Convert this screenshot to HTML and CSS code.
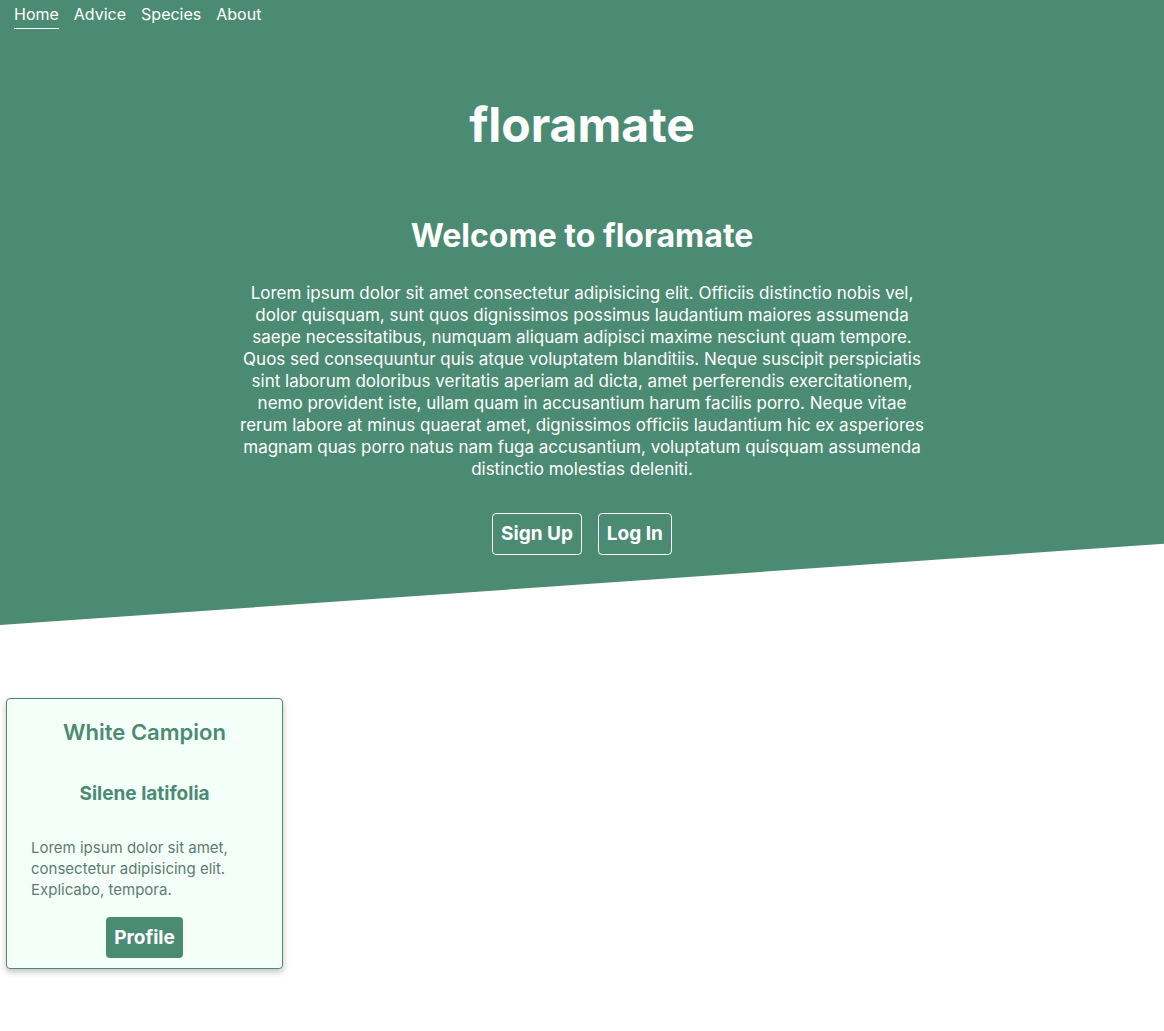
FILE: index.html
```html
<!DOCTYPE html>
<html lang="en">
<head>
<meta charset="utf-8">
<title>floramate</title>
<link rel="stylesheet" href="styles.css">
</head>
<body>
<header class="hero">
  <nav class="nav">
    <a class="nav-link active" href="#">Home</a>
    <a class="nav-link" href="#">Advice</a>
    <a class="nav-link" href="#">Species</a>
    <a class="nav-link" href="#">About</a>
  </nav>
  <h1 class="brand">floramate</h1>
  <section class="intro">
    <h2 class="intro-title">Welcome to floramate</h2>
    <p class="intro-text">Lorem ipsum dolor sit amet consectetur adipisicing elit. Officiis distinctio nobis vel, dolor quisquam, sunt quos dignissimos possimus laudantium maiores assumenda saepe necessitatibus, numquam aliquam adipisci maxime nesciunt quam tempore. Quos sed consequuntur quis atque voluptatem blanditiis. Neque suscipit perspiciatis sint laborum doloribus veritatis aperiam ad dicta, amet perferendis exercitationem, nemo provident iste, ullam quam in accusantium harum facilis porro. Neque vitae rerum labore at minus quaerat amet, dignissimos officiis laudantium hic ex asperiores magnam quas porro natus nam fuga accusantium, voluptatum quisquam assumenda distinctio molestias deleniti.</p>
    <div class="actions">
      <a class="btn-outline" href="#">Sign Up</a>
      <a class="btn-outline" href="#">Log In</a>
    </div>
  </section>
</header>
<main class="cards">
  <article class="card">
    <h3 class="card-title">White Campion</h3>
    <h4 class="card-sub">Silene latifolia</h4>
    <p class="card-text">Lorem ipsum dolor sit amet, consectetur adipisicing elit. Explicabo, tempora.</p>
    <a class="btn-fill" href="#">Profile</a>
  </article>
</main>
</body>
</html>
```
FILE: styles.css
```css
* { box-sizing: border-box; }
body {
  margin: 0;
  font-family: Inter, "Noto Sans", sans-serif;
  background: #fff;
}
a { text-decoration: none; color: inherit; }
.hero {
  background: #4b8b73;
  color: #fff;
  height: 625px;
  clip-path: polygon(0 0, 100% 0, 100% 87%, 0 100%);
  padding-top: 4px;
}
.nav {
  display: flex;
  gap: 15px;
  padding-left: 14px;
  font-size: 16px;
}
.nav-link {
  padding-bottom: 4px;
  border-bottom: 1px solid transparent;
}
.nav-link.active { border-bottom-color: #fff; }
.brand {
  margin: 66px 0 0;
  text-align: center;
  font-size: 48px;
  font-weight: 700;
  line-height: 60px;
}
.intro {
  width: 700px;
  margin: 0 auto;
  text-align: center;
}
.intro-title {
  margin: 61px 0 0;
  font-size: 32px;
  font-weight: 700;
  line-height: 40px;
}
.intro-text {
  margin: 26px 0 0;
  font-size: 17px;
  line-height: 22px;
}
.actions {
  display: flex;
  justify-content: center;
  gap: 16px;
  margin-top: 33px;
}
.btn-outline {
  border: 1px solid #fff;
  border-radius: 4px;
  padding: 0 8px;
  height: 42px;
  line-height: 40px;
  font-size: 19px;
  font-weight: 700;
}
.cards {
  padding: 73px 6px;
  display: flex;
}
.card {
  width: 277px;
  height: 271px;
  background: #f5fff9;
  border: 1px solid #4b8b73;
  border-radius: 4px;
  box-shadow: 0 3px 6px rgba(0,0,0,0.25);
  display: flex;
  flex-direction: column;
  align-items: center;
  color: #4b8b73;
  padding: 19px 24px 0;
}
.card-title {
  margin: 0;
  font-size: 22px;
  font-weight: 600;
  line-height: 28px;
}
.card-sub {
  margin: 36px 0 0;
  font-size: 19px;
  font-weight: 700;
  line-height: 24px;
}
.card-text {
  margin: 31px 0 0;
  font-size: 15px;
  line-height: 21px;
  color: #5b7d70;
  align-self: stretch;
}
.btn-fill {
  margin-top: 17px;
  background: #4b8b73;
  color: #fff;
  border-radius: 4px;
  padding: 0 8px;
  height: 41px;
  line-height: 41px;
  font-size: 19px;
  font-weight: 700;
}
```
